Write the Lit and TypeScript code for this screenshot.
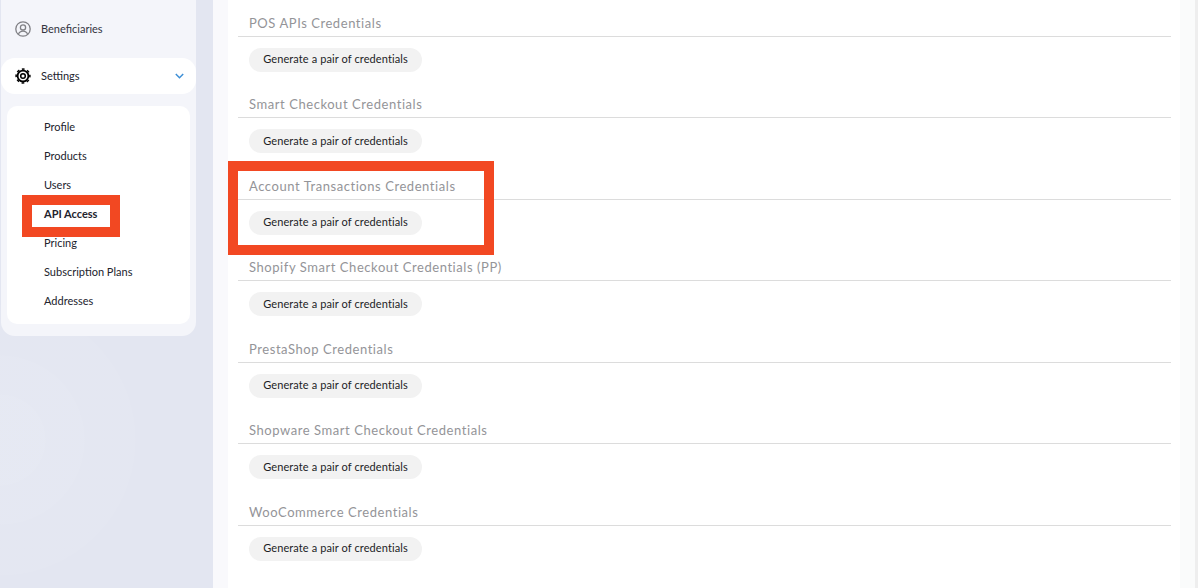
import { LitElement, html, css } from "lit";
import { customElement } from "lit/decorators.js";

const SECTIONS = [
  "POS APIs Credentials",
  "Smart Checkout Credentials",
  "Account Transactions Credentials",
  "Shopify Smart Checkout Credentials (PP)",
  "PrestaShop Credentials",
  "Shopware Smart Checkout Credentials",
  "WooCommerce Credentials",
];
const MENU = ["Profile", "Products", "Users", "API Access", "Pricing", "Subscription Plans", "Addresses"];

@customElement("app-root")
export class AppRoot extends LitElement {
  static styles = css`
    :host {
      display: block;
      width: 1198px;
      height: 588px;
      overflow: hidden;
      position: relative;
      font-family: "Lato", "Noto Sans", sans-serif;
      color: #1c1d26;
    }
    .page { display: flex; height: 588px; }
    .side {
      width: 213px;
      flex: none;
      box-sizing: border-box;
      padding-left: 1px;
      background:
        radial-gradient(circle at 0 440px, rgba(255,255,255,.05) 0 45px, transparent 46px),
        radial-gradient(circle at 0 440px, rgba(255,255,255,.05) 0 84px, transparent 85px),
        radial-gradient(circle at 0 440px, rgba(255,255,255,.04) 0 135px, transparent 136px),
        #e3e6f1;
    }
    .panel {
      width: 195px;
      height: 336px;
      box-sizing: border-box;
      background: #f4f5fa;
      border-radius: 0 0 14px 14px;
      padding-top: 11px;
    }
    .row {
      display: flex;
      align-items: center;
      height: 36px;
      padding-left: 14px;
      gap: 10px;
      font-size: 11px;
      color: #33343f;
    }
    .row svg { flex: none; }
    .row span { margin-bottom: 2px; }
    .row.active {
      margin-top: 11px;
      background: #fff;
      border-radius: 14px;
      color: #22232d;
    }
    .chev { margin-left: auto; margin-right: 12px; }
    .sub {
      margin: 12px 6px 0 6px;
      height: 218px;
      box-sizing: border-box;
      background: #fff;
      border-radius: 10px;
      padding: 7px 0 0 37px;
    }
    .sub div {
      height: 29px;
      line-height: 27px;
      font-size: 11px;
      color: #22232d;
    }
    .sub div.on { font-weight: 700; }
    .gap { width: 15px; flex: none; background: #f9f9fc; }
    .main {
      width: 952px;
      flex: none;
      box-sizing: border-box;
      background: #fff;
      padding: 11.75px 9px 0 10px;
    }
    .rightgap { width: 15px; flex: none; background: #fafbfb; }
    .edge { flex: 1; background: #eeeeee; }
    .sec { height: 81.5px; }
    .sec h3 {
      margin: 0;
      height: 25px;
      line-height: 23px;
      padding-left: 11px;
      font-size: 13px;
      font-weight: 400;
      letter-spacing: 0.56px;
      color: #949498;
      border-bottom: 1px solid #dcdcdc;
      box-sizing: border-box;
    }
    .btn {
      display: inline-flex;
      align-items: center;
      justify-content: center;
      margin: 11px 0 0 11px;
      height: 24px;
      width: 173px;
      box-sizing: border-box;
      border: none;
      border-radius: 12px;
      background: #f2f2f2;
      font: 400 11px "Lato", "Noto Sans", sans-serif;
      letter-spacing: 0.1px;
      color: #1c1d26;
      padding: 0 0 2px 0;
    }
    .red {
      position: absolute;
      box-sizing: border-box;
      border: 10px solid #f24822;
    }
    .r1 { left: 22px; top: 195px; width: 98px; height: 42px; }
    .r2 { left: 228px; top: 161px; width: 266px; height: 94px; }
  `;

  render() {
    return html`
      <div class="page">
        <aside class="side">
          <div class="panel">
            <div class="row">
              <svg width="16" height="16" viewBox="0 0 16 16" fill="none" stroke="#808085" stroke-width="1.3">
                <circle cx="8" cy="8" r="7.2"></circle>
                <circle cx="8" cy="6.4" r="2.6"></circle>
                <path d="M3.4 13.4c.8-2.2 2.5-3.2 4.6-3.2s3.8 1 4.6 3.2"></path>
              </svg>
              <span>Beneficiaries</span>
            </div>
            <div class="row active">
              <svg width="16" height="16" viewBox="0 0 16 16" fill="none" stroke="#000">
                <circle cx="8" cy="8" r="5.4" stroke-width="1.8"></circle>
                <circle cx="8" cy="8" r="6.9" stroke-width="1.5" stroke-dasharray="2.8 2.62" stroke-dashoffset="1.4"></circle>
                <circle cx="8" cy="8" r="2.3" stroke-width="1.5"></circle>
              </svg>
              <span>Settings</span>
              <svg class="chev" width="9" height="6" viewBox="0 0 9 6" fill="none" stroke="#3d8fd6" stroke-width="1.5">
                <path d="M.8 1l3.700 3.700L8.200 1"></path>
              </svg>
            </div>
            <div class="sub">
              ${MENU.map((m) => html`<div class=${m === "API Access" ? "on" : ""}>${m}</div>`)}
            </div>
          </div>
        </aside>
        <div class="gap"></div>
        <main class="main">
          ${SECTIONS.map(
            (s) => html`<section class="sec">
              <h3>${s}</h3>
              <button class="btn">Generate a pair of credentials</button>
            </section>`
          )}
        </main>
        <div class="rightgap"></div>
        <div class="edge"></div>
      </div>
      <div class="red r1"></div>
      <div class="red r2"></div>
    `;
  }
}
